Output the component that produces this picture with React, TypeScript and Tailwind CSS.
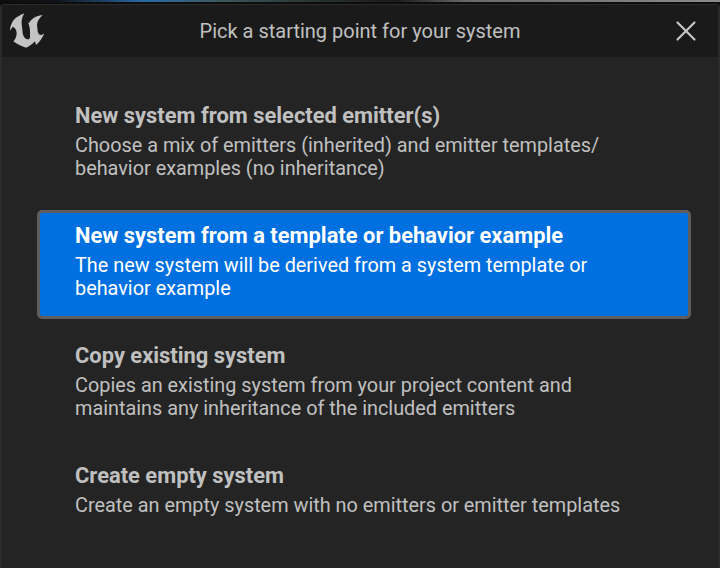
import { X } from "lucide-react";

const options = [
  {
    title: "New system from selected emitter(s)",
    lines: ["Choose a mix of emitters (inherited) and emitter templates/", "behavior examples (no inheritance)"],
  },
  {
    title: "New system from a template or behavior example",
    lines: ["The new system will be derived from a system template or", "behavior example"],
    selected: true,
  },
  {
    title: "Copy existing system",
    lines: ["Copies an existing system from your project content and", "maintains any inheritance of the included emitters"],
  },
  {
    title: "Create empty system",
    lines: ["Create an empty system with no emitters or emitter templates"],
  },
];

function UnrealLogo() {
  return (
    <svg width="40" height="40" viewBox="0 0 120 120" className="overflow-visible text-[#c4c4c4]">
      <path
        fill="currentColor"
        d="M73 40 C60 46 44 52 36 68 C32 76 30 84 30 92 L38 80 C44 82 49 88 50 98 C50 110 46 118 40 124 C50 132 66 140 78 143 C86 140 96 134 105 124 L108 135 C118 128 127 114 133 100 L125 105 C119 106 114 102 113 94 L111 74 C112 62 120 52 128 45 C116 47 106 50 98 56 C92 61 88 66 85 72 L80 60 C84 68 90 78 90 92 L90 110 C90 118 84 120 78 116 C72 112 69 106 68 98 L65 72 C64 60 67 50 73 40 Z"
        transform="translate(-27 -36)"
      />
    </svg>
  );
}

export default function App() {
  return (
    <div className="flex h-[568px] w-[720px] flex-col overflow-hidden bg-[#0d0d0d] font-['Roboto',sans-serif]">
      {/* sliver of whatever sits behind the dialog */}
      <div className="h-[2px] shrink-0 bg-[linear-gradient(90deg,#0d0d0d_0%,#10141a_8%,#2a6aa8_20%,#3c5a60_30%,#26302c_45%,#1a1a1a_55%,#6a6a6a_65%,#8a8a8a_100%)]" />
      <div className="h-[2px] shrink-0" />
      <div className="flex flex-1 flex-col rounded-t border-x-2 border-t border-[#2b2b2b] bg-[#242424]">
        <header className="relative flex h-[52px] shrink-0 items-center justify-center bg-[#1a1a1a]">
          <div className="absolute left-[7px] top-[7px]">
            <UnrealLogo />
          </div>
          <h1 className="text-[20px] text-[#c0c0c0]">Pick a starting point for your system</h1>
          <X className="absolute right-[15px] top-[9px] text-[#c8c8c8]" size={34} strokeWidth={1.5} />
        </header>
        <div className="flex flex-col gap-[11px] pl-[35px] pr-[27px] pt-[33px]">
          {options.map((o) => (
            <div
              key={o.title}
              className={`h-[109px] rounded-[5px] border-[3px] pl-[35px] pt-[10px] ${
                o.selected ? "border-[#5e5e5e] bg-[#0070e0] text-white" : "border-transparent text-[#c0c0c0]"
              }`}
            >
              <div className="text-[21.9px] font-bold leading-[26px]">{o.title}</div>
              <div className="mt-[5px] text-[19.85px] leading-[23px]">
                {o.lines.map((l) => (
                  <div key={l}>{l}</div>
                ))}
              </div>
            </div>
          ))}
        </div>
      </div>
    </div>
  );
}
